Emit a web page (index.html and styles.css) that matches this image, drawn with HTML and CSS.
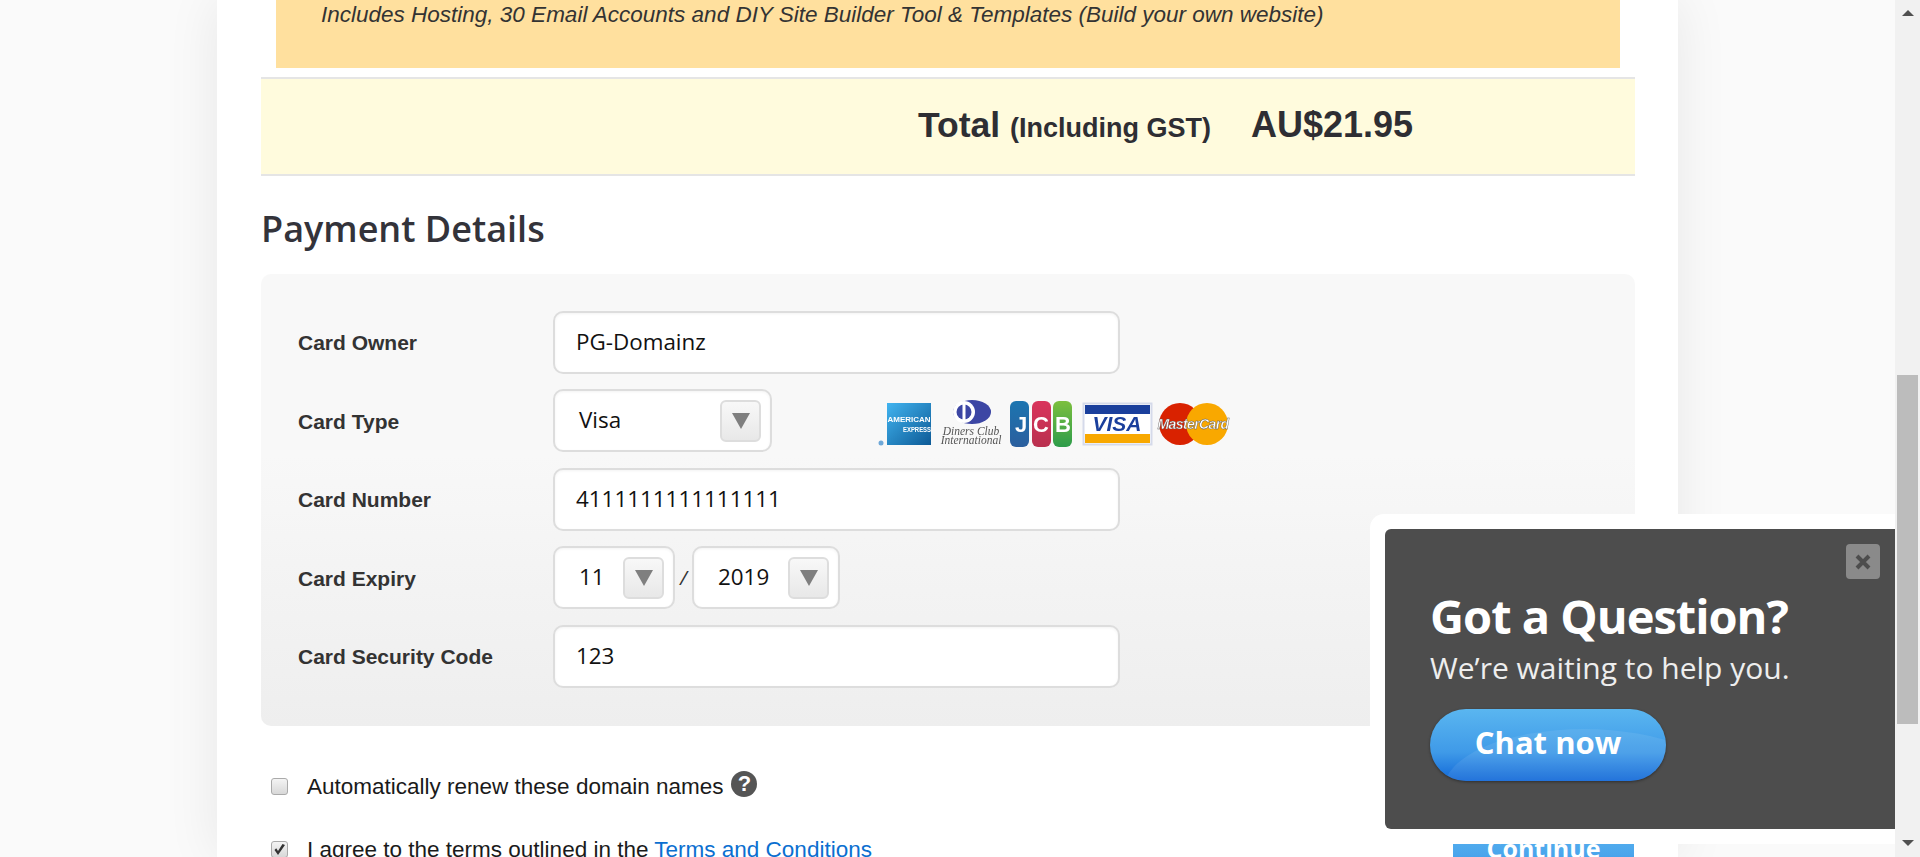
FILE: index.html
```html
<!DOCTYPE html>
<html lang="en">
<head>
    <meta charset="UTF-8">
    <meta name="viewport" content="width=device-width, initial-scale=1.0">
    <title>Payment Details</title>
    <link rel="stylesheet" href="styles.css">
</head>
<body>

    <div class="page">
        <div class="column">
            <div class="package-note">
                <p>Includes Hosting, 30 Email Accounts and DIY Site Builder Tool &amp; Templates (Build your own website)</p>
            </div>

            <div class="total-row">
                <span class="total-label">Total <small>(Including GST)</small></span>
                <span class="total-price">AU$21.95</span>
            </div>

            <h2 class="section-title">Payment Details</h2>

            <div class="payment-panel">
                <label class="field-label">Card Owner</label>
                <div class="field-box field-wide">PG-Domainz</div>

                <label class="field-label">Card Type</label>
                <div class="field-line">
                    <div class="field-box select-box select-type">
                        <span>Visa</span>
                        <span class="select-arrow"></span>
                    </div>
                    <svg class="card-logos" width="352" height="48" viewBox="0 0 352 48">
                        <defs>
                            <linearGradient id="amexFill" x1="0" y1="0" x2="1" y2="1">
                                <stop offset="0" stop-color="#41b4f0"/>
                                <stop offset="1" stop-color="#0d5a96"/>
                            </linearGradient>
                            <linearGradient id="jcbBlue" x1="0" y1="0" x2="0" y2="1">
                                <stop offset="0" stop-color="#1c75b0"/>
                                <stop offset="1" stop-color="#2b5f9e"/>
                            </linearGradient>
                            <linearGradient id="jcbRed" x1="0" y1="0" x2="0" y2="1">
                                <stop offset="0" stop-color="#d9345c"/>
                                <stop offset="1" stop-color="#b9304e"/>
                            </linearGradient>
                            <linearGradient id="jcbGreen" x1="0" y1="0" x2="0" y2="1">
                                <stop offset="0" stop-color="#7cbf3e"/>
                                <stop offset="1" stop-color="#2d9c4a"/>
                            </linearGradient>
                        </defs>

                        <circle cx="3" cy="43" r="2.5" fill="#6ea8d8"/>
                        <rect x="9" y="3" width="44" height="42" fill="url(#amexFill)"/>
                        <text class="logo-amex" x="31" y="22" text-anchor="middle" textLength="43" lengthAdjust="spacingAndGlyphs">AMERICAN</text>
                        <text class="logo-amex" x="39" y="32" text-anchor="middle" textLength="28" lengthAdjust="spacingAndGlyphs">EXPRESS</text>

                        <ellipse cx="94" cy="12" rx="19" ry="12" fill="#3c46a4"/>
                        <circle cx="86" cy="12" r="11" fill="#fff"/>
                        <circle cx="86" cy="12" r="7.5" fill="#3c46a4"/>
                        <rect x="84.5" y="4" width="3" height="16" fill="#fff"/>
                        <text class="logo-diners" x="93" y="35" text-anchor="middle">Diners Club</text>
                        <text class="logo-diners" x="93" y="44" text-anchor="middle">International</text>

                        <rect x="132" y="1" width="19" height="46" rx="6" fill="url(#jcbBlue)"/>
                        <rect x="154" y="1" width="19" height="46" rx="6" fill="url(#jcbRed)"/>
                        <rect x="175" y="1" width="19" height="46" rx="6" fill="url(#jcbGreen)"/>
                        <text class="logo-jcb" x="143" y="32" text-anchor="middle">J</text>
                        <text class="logo-jcb" x="163" y="32" text-anchor="middle">C</text>
                        <text class="logo-jcb" x="185" y="32" text-anchor="middle">B</text>

                        <rect x="205.5" y="3.5" width="68" height="41" fill="#fff" stroke="#d5daea" stroke-width="2"/>
                        <rect x="207" y="5" width="65" height="9" fill="#1a3f9c"/>
                        <rect x="207" y="34" width="65" height="9" fill="#f8a800"/>
                        <text class="logo-visa" x="239" y="31" text-anchor="middle">VISA</text>

                        <circle cx="302" cy="24" r="21" fill="#d92200"/>
                        <circle cx="329" cy="24" r="21" fill="#f9a800"/>
                        <text class="logo-mc" x="315" y="29" text-anchor="middle">MasterCard</text>
                    </svg>
                </div>

                <label class="field-label">Card Number</label>
                <div class="field-box field-wide">4111111111111111</div>

                <label class="field-label">Card Expiry</label>
                <div class="field-line">
                    <div class="field-box select-box select-month">
                        <span>11</span>
                        <span class="select-arrow"></span>
                    </div>
                    <span class="date-slash">/</span>
                    <div class="field-box select-box select-year">
                        <span>2019</span>
                        <span class="select-arrow"></span>
                    </div>
                </div>

                <label class="field-label">Card Security Code</label>
                <div class="field-box field-wide">123</div>
            </div>

            <div class="form-end">
                <div class="option-list">
                    <div class="option-row">
                        <span class="check-box"></span>
                        <span>Automatically renew these domain names</span>
                        <span class="help-icon">?</span>
                    </div>
                    <div class="option-row">
                        <span class="check-box">
                            <svg width="13" height="13" viewBox="0 0 13 13"><path d="M1.5 7 L5 12 L12 2 L9.5 1 L5 8 L3.2 5.2 Z" fill="#333"/></svg>
                        </span>
                        <span>I agree to the terms outlined in the <a href="#">Terms and Conditions</a></span>
                    </div>
                </div>
                <button class="continue-button">Continue</button>
            </div>
        </div>

        <div class="chat-frame">
            <div class="chat-box">
                <button class="chat-close">
                    <svg width="16" height="16" viewBox="0 0 16 16"><path d="M2 2 L14 14 M14 2 L2 14" stroke="#4d4d4d" stroke-width="4"/></svg>
                </button>
                <h3>Got a Question?</h3>
                <p>We’re waiting to help you.</p>
                <button class="chat-now"><span>Chat now</span></button>
            </div>
        </div>
    </div>

    <div class="scrollbar">
        <span class="scroll-up"></span>
        <div class="scroll-thumb"></div>
        <span class="scroll-down"></span>
    </div>

</body>
</html>
```

FILE: styles.css
```css
body {
    margin: 0;
    height: 100vh;
    overflow: hidden;
    display: flex;
    background-color: #fafafa;
    color: #222;
    font-family: 'Liberation Sans', Arial, sans-serif;
}

.page {
    flex: 1;
    position: relative;
    overflow: hidden;
}

.column {
    width: 1374px;
    height: 100%;
    margin: 0 auto;
    padding: 0 43px 0 44px;
    background-color: #fff;
    box-shadow: 0 0 50px rgba(0, 0, 0, 0.08);
}

/* orange package note */
.package-note {
    height: 68px;
    margin: 0 15px 9px 15px;
    padding-left: 45px;
    background-color: #ffe09e;
}

.package-note p {
    margin: 0;
    font-size: 22.5px;
    line-height: 29px;
    font-style: italic;
    color: #333;
}

.total-row {
    box-sizing: border-box;
    height: 99px;
    display: flex;
    align-items: center;
    padding: 0 0 3px 657px;
    background-color: #fffbdd;
    border-top: 2px solid #e5e5e5;
    border-bottom: 2px solid #e5e5e5;
    color: #2e2e33;
    font-weight: bold;
}

.total-label {
    font-size: 35.5px;
    width: 333px;
}

.total-label small {
    font-size: 27px;
}

.total-price {
    font-size: 36px;
}

.section-title {
    margin: 0;
    height: 98px;
    line-height: 106px;
    font-family: 'Open Sans', sans-serif;
    font-size: 36px;
    font-weight: 600;
    color: #33333a;
}

.payment-panel {
    display: grid;
    grid-template-columns: 255px 1fr;
    grid-template-rows: 63px 64px 63px 64px 63px;
    row-gap: 15px;
    align-items: center;
    padding: 37px 37px 38px 37px;
    background: linear-gradient(#f8f8f8 40%, #eee);
    border-radius: 10px;
}

.field-label {
    padding-top: 1px;
    font-size: 21px;
    font-weight: bold;
    color: #333;
}

.field-line {
    display: flex;
    align-items: center;
    align-self: start;
    height: 63px;
}

.field-box {
    box-sizing: border-box;
    height: 63px;
    display: flex;
    align-items: center;
    align-self: start;
    padding-bottom: 2px;
    background-color: #fff;
    border: 2px solid #ddd;
    border-radius: 10px;
    font-family: 'Open Sans', sans-serif;
    font-size: 22.4px;
    color: #111;
    box-shadow: inset 0 1px 3px rgba(0, 0, 0, 0.05);
}

.field-wide {
    width: 567px;
    padding-left: 21px;
}

.select-box {
    justify-content: space-between;
    padding: 0 9px 2px 24px;
}

.select-type {
    width: 219px;
}

.select-month {
    width: 122px;
}

.select-year {
    width: 148px;
}

.select-arrow {
    box-sizing: border-box;
    width: 41px;
    height: 42px;
    margin-top: 2px;
    display: flex;
    justify-content: center;
    align-items: center;
    background: linear-gradient(#f8f8f8, #e8e8e8);
    border: 2px solid #ddd;
    border-radius: 6px;
}

.select-arrow::before {
    content: "";
    border-top: 16px solid #7f7f7f;
    border-left: 9px solid transparent;
    border-right: 9px solid transparent;
}

.date-slash {
    width: 17px;
    text-align: center;
    font-family: 'Open Sans', sans-serif;
    font-size: 20px;
    font-style: italic;
    color: #333;
}

.card-logos {
    margin: 6px 0 0 106px;
    filter: blur(0.3px);
}

.logo-amex {
    font: bold 8px 'Liberation Sans', sans-serif;
    fill: #fff;
}

.logo-diners {
    font: italic 11.5px 'Liberation Serif', serif;
    fill: #555;
}

.logo-jcb {
    font: bold 22px 'Liberation Sans', sans-serif;
    fill: #fff;
}

.logo-visa {
    font: italic bold 21px 'Liberation Sans', sans-serif;
    fill: #1a3f9c;
}

.logo-mc {
    font: italic bold 14px 'Liberation Sans', sans-serif;
    fill: #fff;
    stroke: #555;
    stroke-width: 0.4px;
    letter-spacing: -0.6px;
}

/* checkboxes and continue button */
.form-end {
    display: flex;
    justify-content: space-between;
    align-items: flex-start;
}

.option-list {
    padding: 46px 0 0 10px;
}

.option-row {
    display: flex;
    align-items: center;
    height: 30px;
    margin-bottom: 33px;
    font-size: 22.5px;
    color: #1a1a1a;
}

.option-row a {
    color: #0b6fd0;
    text-decoration: none;
}

.check-box {
    box-sizing: border-box;
    width: 17px;
    height: 17px;
    margin: -2px 19px 0 0;
    display: flex;
    justify-content: center;
    align-items: center;
    background: linear-gradient(#f4f4f4, #d8d8d8);
    border: 1px solid #aaa;
    border-radius: 3px;
}

.help-icon {
    width: 26px;
    height: 26px;
    margin: -7px 0 0 8px;
    border-radius: 50%;
    background-color: #555;
    color: #fff;
    font-size: 22px;
    font-weight: bold;
    line-height: 26px;
    text-align: center;
}

.continue-button {
    width: 181px;
    height: 72px;
    margin: 86px 1px 0 0;
    border: none;
    border-radius: 8px;
    background: linear-gradient(#62baf2, #4aa5ec 60%, #1168d8);
    color: #fff;
    font-family: 'Open Sans', sans-serif;
    font-size: 25px;
    font-weight: bold;
}

/* chat popup */
.chat-frame {
    position: absolute;
    right: 0;
    bottom: 13px;
    box-sizing: border-box;
    width: 525px;
    height: 330px;
    padding: 15px 0 15px 15px;
    background-color: #fff;
    border-radius: 14px 0 0 0;
}

.chat-box {
    position: relative;
    box-sizing: border-box;
    height: 300px;
    padding: 58px 0 0 45px;
    background-color: #4d4d4d;
    border-radius: 6px 0 0 6px;
    color: #fff;
    font-family: 'Open Sans', sans-serif;
}

.chat-box h3 {
    margin: 0;
    font-size: 47px;
    line-height: 58px;
    font-weight: bold;
    letter-spacing: -1px;
}

.chat-box p {
    margin: 2px 0 20px 0;
    font-size: 30px;
    line-height: 42px;
    color: #eee;
}

.chat-close {
    position: absolute;
    top: 15px;
    right: 15px;
    width: 34px;
    height: 35px;
    padding: 0;
    display: flex;
    justify-content: center;
    align-items: center;
    border: none;
    border-radius: 4px;
    background-color: #8a8a8a;
}

.chat-now {
    position: relative;
    overflow: hidden;
    width: 236px;
    height: 72px;
    padding: 0 0 6px 0;
    border: none;
    border-radius: 36px;
    background: linear-gradient(#5ab6f0, #3f9ae8 60%, #1168d8);
    box-shadow: 0 1px 3px rgba(0, 0, 0, 0.4);
    color: #fff;
    font-family: 'Open Sans', sans-serif;
    font-size: 31px;
    font-weight: bold;
}

.chat-now::before {
    content: "";
    position: absolute;
    left: 14px;
    top: 20px;
    width: 280px;
    height: 120px;
    border-radius: 50%;
    background-color: rgba(255, 255, 255, 0.08);
}

.chat-now span {
    position: relative;
}

/* fake browser scrollbar */
.scrollbar {
    width: 25px;
    display: flex;
    flex-direction: column;
    align-items: center;
    background-color: #f1f1f1;
}

.scroll-up {
    margin-top: 10px;
    border-bottom: 6px solid #505050;
    border-left: 6px solid transparent;
    border-right: 6px solid transparent;
}

.scroll-thumb {
    width: 21px;
    height: 349px;
    margin-top: 359px;
    background-color: #bcbcbc;
}

.scroll-down {
    margin-top: 116px;
    border-top: 6px solid #505050;
    border-left: 6px solid transparent;
    border-right: 6px solid transparent;
}
```
